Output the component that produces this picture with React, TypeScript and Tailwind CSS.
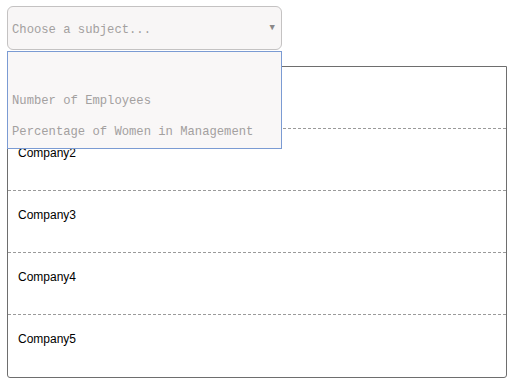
import React from "react";

export default function App() {
  const rows = ["", "Company2", "Company3", "Company4", "Company5"];
  const mono = { fontFamily: '"Liberation Mono", "DejaVu Sans Mono", monospace' };
  return (
    <div className="relative w-[515px] h-[386px] bg-white pl-[7px] pt-[6px]">
      <div className="relative w-[275px]">
        <div
          className="h-[44px] w-[275px] rounded-[6px] border border-[#c4c2c2] bg-[#f8f6f6] flex items-center pl-[4px] pr-[6px] justify-between"
          style={mono}
        >
          <span className="text-[12.2px] text-[#a3a09f] leading-none mt-[5px]">Choose a subject...</span>
          <span className="text-[9px] text-[#8a8888] leading-none">▼</span>
        </div>
        <div
          className="absolute left-0 top-[45px] z-10 w-[275px] h-[98px] border border-[#7b9bd3] bg-[#f9f7f7] flex flex-col pt-[2px]"
          style={mono}
        >
          <div className="h-[32px]"></div>
          <div className="h-[32px] flex items-center pl-[4px] text-[12.2px] text-[#a3a09f]">Number of Employees</div>
          <div className="h-[32px] flex items-center pl-[4px] text-[12.2px] text-[#a3a09f]">Percentage of Women in Management</div>
        </div>
      </div>
      <div
        className="mt-[16px] w-[500px] border border-[#6e6e6e] rounded-b-[3px] flex flex-col"
        style={{ fontFamily: '"Liberation Sans", Arial, sans-serif' }}
      >
        {rows.map((r, i) => (
          <div
            key={i}
            className={
              i < rows.length - 1
                ? "h-[62px] border-b border-dashed border-[#9a9a9a] pl-[10px] pt-[16px] text-[12px] leading-[16px] text-black"
                : "h-[62px] pl-[10px] pt-[16px] text-[12px] leading-[16px] text-black"
            }
          >
            {r}
          </div>
        ))}
      </div>
    </div>
  );
}
